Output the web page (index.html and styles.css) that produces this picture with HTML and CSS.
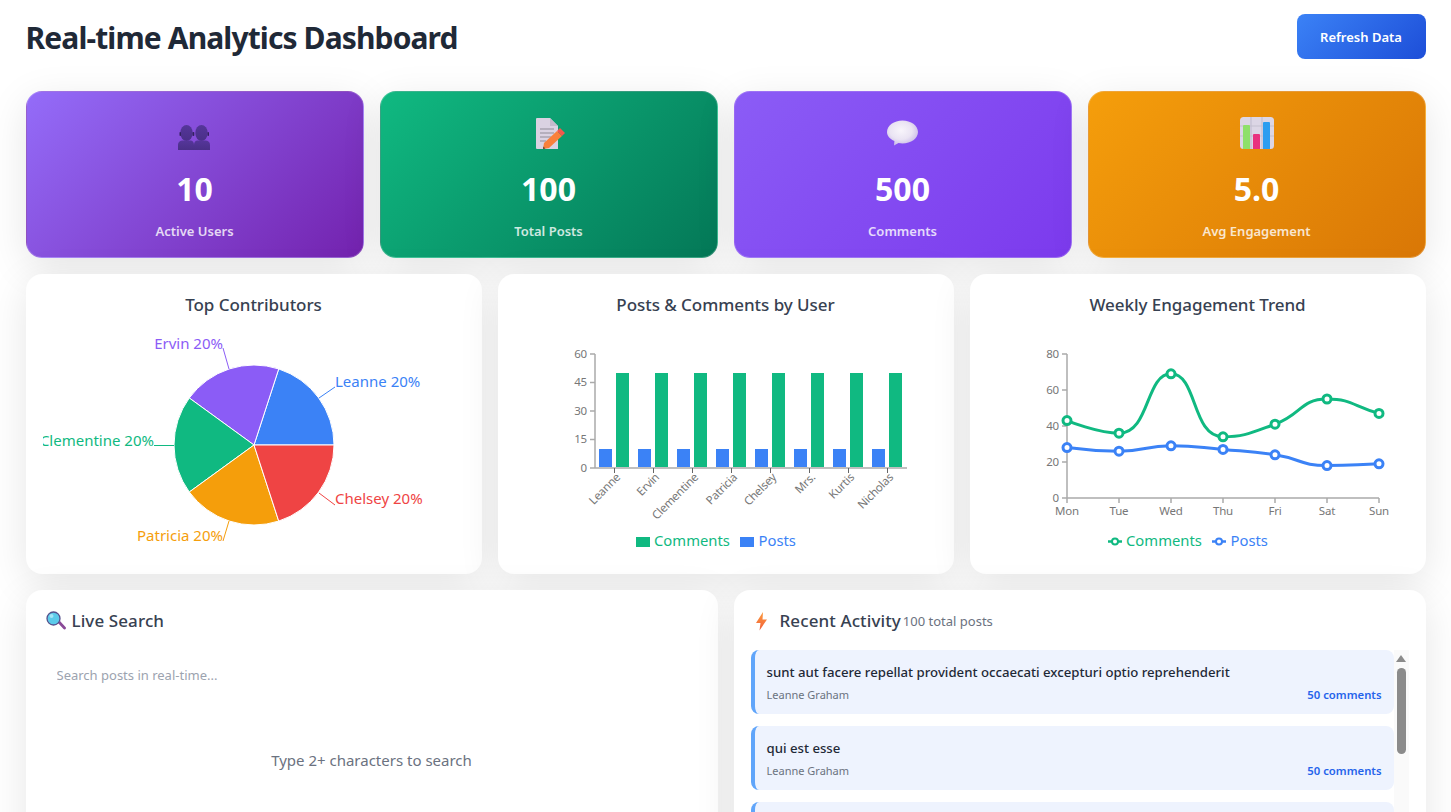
FILE: index.html
```html
<!DOCTYPE html>
<html lang="en">
<head>
    <meta charset="UTF-8">
    <meta name="viewport" content="width=device-width, initial-scale=1.0">
    <title>Real-time Analytics Dashboard</title>
    <link rel="stylesheet" href="styles.css">
</head>
<body>
<div class="dashboard">
    <header class="top-bar">
        <h1>Real-time Analytics Dashboard</h1>
        <button class="refresh-btn" type="button">Refresh Data</button>
    </header>

    <section class="stats">
        <div class="stat stat-users">
            <svg class="stat-icon" viewBox="0 0 36 36">
                <defs>
                    <linearGradient id="personFill" x1="0" y1="0" x2="0" y2="1">
                        <stop offset="0" stop-color="#55369a"/>
                        <stop offset="1" stop-color="#4a2f88"/>
                    </linearGradient>
                </defs>
                <g fill="url(#personFill)">
                    <ellipse cx="9.500" cy="18" rx="6.200" ry="8"/>
                    <ellipse cx="24.500" cy="18" rx="6.200" ry="8"/>
                    <path d="M1 35v-5q0-4 4-4.500h9q3 .5 3 4.500v5z"/>
                    <path d="M17 35v-5q0-4 3-4.500h9q4 .5 4 4.500v5z"/>
                </g>
                <rect x="15.500" y="17" width="1.800" height="4" rx=".8" fill="#33215f"/>
                <rect x="2.500" y="17" width="1.500" height="4" rx=".7" fill="#33215f"/>
                <rect x="30.500" y="17" width="1.500" height="4" rx=".7" fill="#33215f"/>
            </svg>
            <div class="stat-value">10</div>
            <div class="stat-label">Active Users</div>
        </div>
        <div class="stat stat-posts">
            <svg class="stat-icon" viewBox="0 0 36 36">
                <path fill="#dad2e2" d="M6 3h13l8 8v23H6a1 1 0 0 1-1-1V4a1 1 0 0 1 1-1z"/>
                <path fill="#c3bbcc" d="M19 3l8 8h-8z"/>
                <path stroke="#a9a4b1" stroke-width="1.300" d="M9 14h14M9 18h14M9 22h11M9 26h6"/>
                <path fill="#f9803b" d="M12 34l1-6 13-12 5 5-13 12z"/>
                <path fill="#f4574c" d="M26 16l3-3 5 5-3 3z"/>
                <path fill="#5c4632" d="M12 34l.4-2.500 2 2z"/>
            </svg>
            <div class="stat-value">100</div>
            <div class="stat-label">Total Posts</div>
        </div>
        <div class="stat stat-comments">
            <svg class="stat-icon" viewBox="0 0 36 36">
                <defs>
                    <radialGradient id="bubbleFill" cx=".45" cy=".4" r=".65">
                        <stop offset="0" stop-color="#f8f5fb"/>
                        <stop offset=".55" stop-color="#eae4f3"/>
                        <stop offset="1" stop-color="#c4b3e6"/>
                    </radialGradient>
                </defs>
                <path fill="url(#bubbleFill)" d="M17.500 5.500c8.500 0 15.500 5 15.500 11.500s-7 11.500-15.500 11.500q-2 0-4-.4L9 30.500l.4-4.500C4.800 24 2 20.800 2 17 2 10.500 9 5.500 17.500 5.500z"/>
            </svg>
            <div class="stat-value">500</div>
            <div class="stat-label">Comments</div>
        </div>
        <div class="stat stat-engagement">
            <svg class="stat-icon" viewBox="0 0 36 36">
                <rect x="1" y="2" width="34" height="32" rx="3.500" fill="#dcd6e5"/>
                <path stroke="#c4bfd0" stroke-width="1.200" d="M12 2v32M23 2v32M1 11h34M1 21h34"/>
                <path fill="#8ee06a" d="M4 34V11a1 1 0 0 1 1-1h5a1 1 0 0 1 1 1v23z"/>
                <path fill="#e9327f" d="M14 34V20a1 1 0 0 1 1-1h5a1 1 0 0 1 1 1v14z"/>
                <path fill="#2b9df0" d="M24 34V8a1 1 0 0 1 1-1h5a1 1 0 0 1 1 1v26z"/>
            </svg>
            <div class="stat-value">5.0</div>
            <div class="stat-label">Avg Engagement</div>
        </div>
    </section>

    <section class="charts">
        <div class="panel chart-panel">
            <h3 class="chart-title">Top Contributors</h3>
            <svg class="chart" viewBox="43 325 422 240">
                <g stroke="#fff" stroke-width="1">
                    <path fill="#3b82f6" d="M254 445L334 445A80 80 0 0 0 278.720 368.920Z"/>
                    <path fill="#8b5cf6" d="M254 445L278.720 368.920A80 80 0 0 0 189.280 397.980Z"/>
                    <path fill="#10b981" d="M254 445L189.280 397.980A80 80 0 0 0 189.280 492.020Z"/>
                    <path fill="#f59e0b" d="M254 445L189.280 492.020A80 80 0 0 0 278.720 521.080Z"/>
                    <path fill="#ef4444" d="M254 445L278.720 521.080A80 80 0 0 0 334 445Z"/>
                </g>
                <g fill="none">
                    <path stroke="#3b82f6" d="M319 398L335 387"/>
                    <path stroke="#8b5cf6" d="M229 369L223 348"/>
                    <path stroke="#10b981" d="M174 445.500H154"/>
                    <path stroke="#f59e0b" d="M229 521L223 541"/>
                    <path stroke="#ef4444" d="M319 493L335 505"/>
                </g>
                <g class="pie-label">
                    <text x="335" y="387" fill="#3b82f6">Leanne 20%</text>
                    <text x="223" y="349" fill="#8b5cf6" text-anchor="end">Ervin 20%</text>
                    <text x="154" y="446" fill="#10b981" text-anchor="end">Clementine 20%</text>
                    <text x="223" y="541" fill="#f59e0b" text-anchor="end">Patricia 20%</text>
                    <text x="335" y="504" fill="#ef4444">Chelsey 20%</text>
                </g>
            </svg>
        </div>

        <div class="panel chart-panel">
            <h3 class="chart-title">Posts &amp; Comments by User</h3>
            <svg class="chart" viewBox="515 325 422 240">
                <path class="axis" d="M595 354V468M590 354H595M590 382.500H595M590 411H595M590 439.500H595M590 468H907"/>
                <path class="tick" d="M614.500 468v5M653.500 468v5M692.500 468v5M731.500 468v5M770.500 468v5M809.500 468v5M848.500 468v5M887.500 468v5"/>
                <g fill="#3b82f6">
                    <rect x="599" y="449" width="13" height="18"/>
                    <rect x="638" y="449" width="13" height="18"/>
                    <rect x="677" y="449" width="13" height="18"/>
                    <rect x="716" y="449" width="13" height="18"/>
                    <rect x="755" y="449" width="13" height="18"/>
                    <rect x="794" y="449" width="13" height="18"/>
                    <rect x="833" y="449" width="13" height="18"/>
                    <rect x="872" y="449" width="13" height="18"/>
                </g>
                <g fill="#10b981">
                    <rect x="616" y="373" width="13" height="94"/>
                    <rect x="655" y="373" width="13" height="94"/>
                    <rect x="694" y="373" width="13" height="94"/>
                    <rect x="733" y="373" width="13" height="94"/>
                    <rect x="772" y="373" width="13" height="94"/>
                    <rect x="811" y="373" width="13" height="94"/>
                    <rect x="850" y="373" width="13" height="94"/>
                    <rect x="889" y="373" width="13" height="94"/>
                </g>
                <g class="axis-label" text-anchor="end">
                    <text x="587" y="358">60</text>
                    <text x="587" y="386">45</text>
                    <text x="587" y="415">30</text>
                    <text x="587" y="443">15</text>
                    <text x="587" y="472">0</text>
                </g>
                <g class="axis-label" text-anchor="end">
                    <text transform="translate(621 478) rotate(-45)">Leanne</text>
                    <text transform="translate(660 478) rotate(-45)">Ervin</text>
                    <text transform="translate(699 478) rotate(-45)">Clementine</text>
                    <text transform="translate(738 478) rotate(-45)">Patricia</text>
                    <text transform="translate(777 478) rotate(-45)">Chelsey</text>
                    <text transform="translate(816 478) rotate(-45)">Mrs.</text>
                    <text transform="translate(855 478) rotate(-45)">Kurtis</text>
                    <text transform="translate(894 478) rotate(-45)">Nicholas</text>
                </g>
                <rect x="636" y="537" width="14" height="10" fill="#10b981"/>
                <text class="legend" x="654" y="546" fill="#10b981">Comments</text>
                <rect x="740" y="537" width="14" height="10" fill="#3b82f6"/>
                <text class="legend" x="758.500" y="546" fill="#3b82f6">Posts</text>
            </svg>
        </div>

        <div class="panel chart-panel">
            <h3 class="chart-title">Weekly Engagement Trend</h3>
            <svg class="chart" viewBox="987 325 422 240">
                <path class="axis" d="M1067 354V498M1062 354H1067M1062 390H1067M1062 426H1067M1062 462H1067M1062 498H1379"/>
                <path class="axis" d="M1067 498v5M1119 498v5M1171 498v5M1223 498v5M1275 498v5M1327 498v5M1379 498v5"/>
                <g class="axis-label" text-anchor="end">
                    <text x="1059" y="358">80</text>
                    <text x="1059" y="394">60</text>
                    <text x="1059" y="430">40</text>
                    <text x="1059" y="466">20</text>
                    <text x="1059" y="502">0</text>
                </g>
                <g class="axis-label" text-anchor="middle">
                    <text x="1067" y="515">Mon</text>
                    <text x="1119" y="515">Tue</text>
                    <text x="1171" y="515">Wed</text>
                    <text x="1223" y="515">Thu</text>
                    <text x="1275" y="515">Fri</text>
                    <text x="1327" y="515">Sat</text>
                    <text x="1379" y="515">Sun</text>
                </g>
                <path class="line" stroke="#10b981" d="M1067 420.600C1067 420.600 1098 433.200 1119 433.200C1150 433.200 1145.400 373.800 1171 373.800C1197.500 373.800 1191.500 436.800 1223 436.800C1243.600 436.800 1250 433.300 1275 424.200C1302 414.400 1300.100 399 1327 399C1352.100 399 1353 406.200 1379 413.400"/>
                <path class="line" stroke="#3b82f6" d="M1067 447.600C1067 447.600 1093 451.200 1119 451.200C1145 451.200 1145 445.800 1171 445.800C1197 445.800 1197 447.200 1223 449.400C1249 451.600 1249 450.750 1275 454.800C1301 458.850 1301 465.600 1327 465.600C1353 465.600 1353 464.700 1379 463.800"/>
                <g class="dot" stroke="#10b981">
                    <circle cx="1067" cy="420.600" r="4"/>
                    <circle cx="1119" cy="433.200" r="4"/>
                    <circle cx="1171" cy="373.800" r="4"/>
                    <circle cx="1223" cy="436.800" r="4"/>
                    <circle cx="1275" cy="424.200" r="4"/>
                    <circle cx="1327" cy="399" r="4"/>
                    <circle cx="1379" cy="413.400" r="4"/>
                </g>
                <g class="dot" stroke="#3b82f6">
                    <circle cx="1067" cy="447.600" r="4"/>
                    <circle cx="1119" cy="451.200" r="4"/>
                    <circle cx="1171" cy="445.800" r="4"/>
                    <circle cx="1223" cy="449.400" r="4"/>
                    <circle cx="1275" cy="454.800" r="4"/>
                    <circle cx="1327" cy="465.600" r="4"/>
                    <circle cx="1379" cy="463.800" r="4"/>
                </g>
                <path class="legend-line" stroke="#10b981" d="M1108 541.500h14"/>
                <circle class="legend-dot" cx="1115" cy="541.500" r="3" stroke="#10b981"/>
                <text class="legend" x="1126" y="546" fill="#10b981">Comments</text>
                <path class="legend-line" stroke="#3b82f6" d="M1212 541.500h14"/>
                <circle class="legend-dot" cx="1219" cy="541.500" r="3" stroke="#3b82f6"/>
                <text class="legend" x="1230.500" y="546" fill="#3b82f6">Posts</text>
            </svg>
        </div>
    </section>

    <section class="bottom">
        <div class="panel">
            <div class="panel-head">
                <h3 class="panel-title">
                    <svg class="title-icon" viewBox="0 0 20 20">
                        <path d="M12 12l2-2 5.500 6a1.400 1.400 0 0 1-2 2z" fill="#8a4a98"/>
                        <circle cx="7.500" cy="7.500" r="6.500" fill="#5ccbea" stroke="#55508c" stroke-width="1.300"/>
                        <circle cx="5.500" cy="5" r="2" fill="#a5e6f6"/>
                    </svg>
                    Live Search
                </h3>
            </div>
            <input class="search-input" type="text" placeholder="Search posts in real-time...">
            <p class="search-hint">Type 2+ characters to search</p>
        </div>

        <div class="panel">
            <div class="panel-head">
                <h3 class="panel-title">
                    <svg class="title-icon" viewBox="0 0 20 20">
                        <defs>
                            <linearGradient id="boltFill" x1="0" y1="0" x2="0" y2="1">
                                <stop offset="0" stop-color="#fb9a3c"/>
                                <stop offset="1" stop-color="#f2603c"/>
                            </linearGradient>
                        </defs>
                        <path fill="url(#boltFill)" d="M9 1L2 12h4.500L5.500 19.500 13 8.500H8.500z"/>
                    </svg>
                    Recent Activity
                </h3>
                <span class="panel-count">100 total posts</span>
            </div>
            <div class="activity-wrap">
                <div class="activity-list">
                    <div class="activity-item">
                        <div class="activity-title">sunt aut facere repellat provident occaecati excepturi optio reprehenderit</div>
                        <div class="activity-meta"><span>Leanne Graham</span><span class="activity-count">50 comments</span></div>
                    </div>
                    <div class="activity-item">
                        <div class="activity-title">qui est esse</div>
                        <div class="activity-meta"><span>Leanne Graham</span><span class="activity-count">50 comments</span></div>
                    </div>
                    <div class="activity-item"></div>
                </div>
                <div class="scrollbar">
                    <div class="scrollbar-arrow"></div>
                    <div class="scrollbar-thumb"></div>
                </div>
            </div>
        </div>
    </section>
</div>
</body>
</html>
```

FILE: styles.css
```css
* {
    box-sizing: border-box;
}

html {
    overflow: hidden;
}

body {
    margin: 0;
    background: #fff;
    font-family: "Noto Sans", "Open Sans", sans-serif;
    color: #1f2937;
}

.dashboard {
    max-width: 1400px;
    margin: 0 auto;
    padding-top: 14px;
}

.top-bar {
    display: flex;
    justify-content: space-between;
    align-items: center;
    margin-bottom: 32px;
}

h1 {
    margin: 0;
    padding-top: 2px;
    font-size: 30px;
    font-weight: 700;
    letter-spacing: -0.88px;
    color: #1f2937;
}

.refresh-btn {
    width: 129px;
    height: 45px;
    border: none;
    border-radius: 8px;
    background: linear-gradient(135deg, #3b82f6, #1d4ed8);
    color: #fff;
    font-family: inherit;
    font-size: 13px;
    font-weight: 600;
}

.stats {
    display: grid;
    grid-template-columns: repeat(4, 1fr);
    gap: 16px;
    margin-bottom: 16px;
}

.stat {
    height: 167px;
    padding-top: 23px;
    border: 1px solid rgba(255, 255, 255, 0.2);
    border-radius: 16px;
    color: #fff;
    text-align: center;
    box-shadow: 0 10px 40px rgba(0, 0, 0, 0.1);
}

.stat-users { background: linear-gradient(135deg, #946cf9, #7322ae); }
.stat-posts { background: linear-gradient(135deg, #10b981, #047857); }
.stat-comments { background: linear-gradient(135deg, #8b5cf6, #7c3aed); }
.stat-engagement { background: linear-gradient(135deg, #f59e0b, #d97706); }

.stat-icon {
    display: block;
    width: 36px;
    height: 36px;
    margin: 0 auto;
}

.stat-value {
    margin-top: 16px;
    font-size: 32px;
    font-weight: 700;
    line-height: 44px;
}

.stat-label {
    margin-top: 10px;
    font-size: 13px;
    font-weight: 600;
    line-height: 20px;
    opacity: 0.8;
}

.charts {
    display: grid;
    grid-template-columns: repeat(3, 1fr);
    gap: 16px;
    margin-bottom: 16px;
}

.panel {
    padding: 16px;
    border: 1px solid rgba(255, 255, 255, 0.2);
    border-radius: 16px;
    background: #fff;
    box-shadow: 0 10px 40px rgba(0, 0, 0, 0.1);
}

.chart-panel {
    height: 300px;
}

.chart-title {
    margin: 0 0 6px;
    font-size: 17px;
    font-weight: 550;
    line-height: 28px;
    letter-spacing: -0.05px;
    text-align: center;
    color: #374151;
}

.chart {
    display: block;
    width: 100%;
    height: 240px;
}

.pie-label text {
    font-size: 15px;
}

.legend {
    font-size: 14.8px;
}

.axis {
    fill: none;
    stroke: #aaa;
    stroke-width: 1.5;
}

.tick {
    fill: none;
    stroke: #666;
}

.axis-label {
    font-size: 11.5px;
    fill: #777;
    letter-spacing: -0.2px;
}

.line {
    fill: none;
    stroke-width: 3;
}

.dot circle {
    fill: #fff;
    stroke-width: 3;
}

.legend-line {
    fill: none;
    stroke-width: 2.5;
}

.legend-dot {
    fill: #fff;
    stroke-width: 2;
}

.bottom {
    display: grid;
    grid-template-columns: repeat(2, 1fr);
    gap: 16px;
}

.panel-head {
    display: flex;
    align-items: center;
    margin-bottom: 15px;
}

.panel-title {
    display: flex;
    align-items: center;
    gap: 6px;
    margin: 0;
    font-size: 17px;
    font-weight: 550;
    line-height: 28px;
    letter-spacing: 0.1px;
    color: #374151;
}

.title-icon {
    width: 20px;
    height: 20px;
    margin-left: 3px;
}

.panel-count {
    margin-left: 2px;
    font-size: 13px;
    color: #6b7280;
}

.search-input {
    display: block;
    width: 100%;
    height: 50px;
    padding: 0 14px;
    border: none;
    outline: none;
    font-family: inherit;
    font-size: 13px;
    color: #1f2937;
}

.search-input::placeholder {
    color: #9ca3af;
}

.search-hint {
    margin: 48px 0 0;
    font-size: 15px;
    line-height: 24px;
    text-align: center;
    color: #6b7280;
}

.activity-wrap {
    display: flex;
    height: 300px;
}

.activity-list {
    flex: 1;
    display: flex;
    flex-direction: column;
    gap: 12px;
    overflow: hidden;
}

.scrollbar {
    flex: none;
    width: 15px;
    padding-top: 5px;
    background: #fafafa;
}

.scrollbar-arrow {
    width: 0;
    margin: 0 0 6px 2px;
    border-left: 5.5px solid transparent;
    border-right: 5.5px solid transparent;
    border-bottom: 7px solid #8b8b8b;
}

.scrollbar-thumb {
    width: 9px;
    height: 86px;
    margin-left: 3px;
    border-radius: 5px;
    background: #8b8b8b;
}

.activity-item {
    flex: none;
    height: 64px;
    padding: 12px 12px 0;
    border-left: 4px solid #60a5fa;
    border-radius: 8px;
    background: #eef3fe;
}

.activity-title {
    font-size: 13.2px;
    font-weight: 500;
    line-height: 20px;
    color: #1f2937;
}

.activity-meta {
    display: flex;
    justify-content: space-between;
    margin-top: 5px;
    font-size: 11px;
    line-height: 16px;
    color: #6b7280;
}

.activity-count {
    font-size: 11.3px;
    font-weight: 600;
    color: #2563eb;
}
```
